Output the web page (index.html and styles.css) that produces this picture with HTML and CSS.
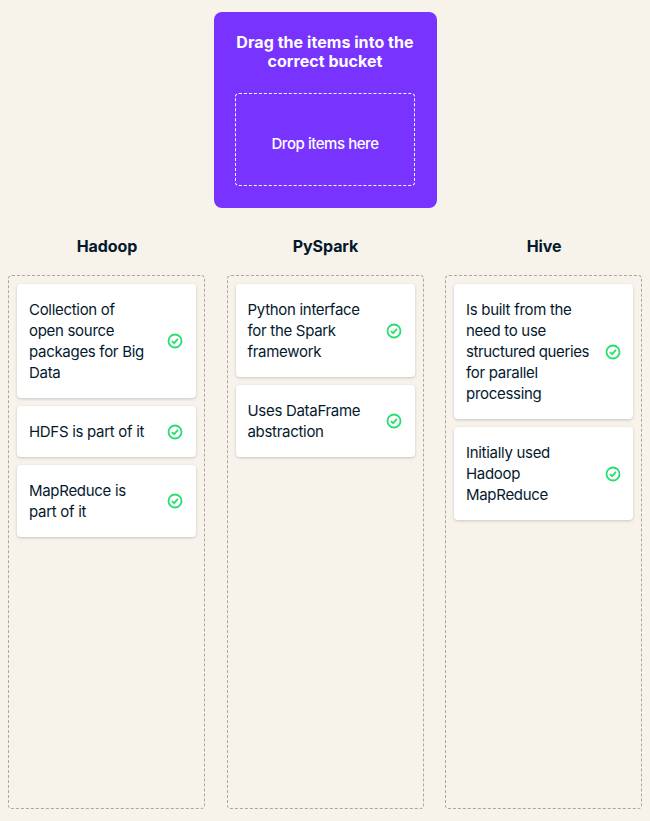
FILE: index.html
```html
<!DOCTYPE html>
<html lang="en">
<head>
<meta charset="utf-8">
<title>Drag the items into the correct bucket</title>
<link rel="stylesheet" href="styles.css">
</head>
<body>
<svg width="0" height="0" class="defs"><symbol id="check" viewBox="0 0 18 18"><circle cx="9" cy="9" r="6.5"/><path d="M5.9 9.1l2.3 2.1 3.7-4.3"/></symbol></svg>
<section class="source">
  <h1>Drag the items into the<br>correct bucket</h1>
  <div class="drop">Drop items here</div>
</section>
<main class="buckets">
  <section class="bucket">
    <h2>Hadoop</h2>
    <div class="zone">
      <div class="card"><p>Collection of<br>open source<br>packages for Big<br>Data</p><svg class="icon"><use href="#check"/></svg></div>
      <div class="card"><p>HDFS is part of it</p><svg class="icon"><use href="#check"/></svg></div>
      <div class="card"><p>MapReduce is<br>part of it</p><svg class="icon"><use href="#check"/></svg></div>
    </div>
  </section>
  <section class="bucket">
    <h2>PySpark</h2>
    <div class="zone">
      <div class="card"><p>Python interface<br>for the Spark<br>framework</p><svg class="icon"><use href="#check"/></svg></div>
      <div class="card"><p>Uses DataFrame<br>abstraction</p><svg class="icon"><use href="#check"/></svg></div>
    </div>
  </section>
  <section class="bucket">
    <h2>Hive</h2>
    <div class="zone">
      <div class="card"><p>Is built from the<br>need to use<br><span class="snug">structured queries</span><br>for parallel<br>processing</p><svg class="icon"><use href="#check"/></svg></div>
      <div class="card"><p>Initially used<br>Hadoop<br>MapReduce</p><svg class="icon"><use href="#check"/></svg></div>
    </div>
  </section>
</main>
</body>
</html>
```
FILE: styles.css
```css
* { box-sizing: border-box; }
body {
  margin: 0;
  padding: 12px 8px;
  height: 821px;
  display: flex;
  flex-direction: column;
  background: #f7f3eb;
  color: #05192d;
  font: 15px/21px Inter, "Liberation Sans", sans-serif;
  letter-spacing: -0.3px;
}
h1, h2, p { margin: 0; }
.defs { display: none; }
.source {
  width: 223px;
  height: 196px;
  margin-left: 206px;
  padding: 21px 22px 22px 21px;
  flex: none;
  border-radius: 8px;
  background: #7933ff;
  color: #fff;
  text-align: center;
}
h1 {
  height: 60px;
  font-size: 16px;
  line-height: 19px;
  font-weight: 700;
  letter-spacing: 0.05px;
  white-space: nowrap;
}
.drop {
  height: 93px;
  padding-top: 8px;
  display: flex;
  align-items: center;
  justify-content: center;
  border: 1px dashed #fff;
  border-radius: 4px;
  font-weight: 500;
  letter-spacing: -0.45px;
}
.buckets {
  flex: 1;
  display: grid;
  grid-template-columns: repeat(3, 197px);
  justify-content: space-between;
}
.bucket { display: flex; flex-direction: column; }
h2 {
  height: 67px;
  padding: 28px 0 0 1px;
  font-size: 16px;
  line-height: 20px;
  font-weight: 700;
  letter-spacing: -0.1px;
  text-align: center;
}
.zone {
  flex: 1;
  padding: 8px;
  display: flex;
  flex-direction: column;
  gap: 8px;
  border: 1px dashed #aaa6a1;
  border-radius: 4px;
}
.card {
  padding: 15px 12px;
  display: flex;
  align-items: center;
  justify-content: space-between;
  border-radius: 4px;
  background: #fff;
  box-shadow: 0 1px 3px rgba(5, 25, 45, 0.2);
}
.card p { white-space: nowrap; }
.snug { letter-spacing: -0.4px; }
.icon {
  width: 18px;
  height: 18px;
  flex: none;
  fill: none;
  stroke: #27df70;
  stroke-width: 1.8;
}
.bucket:last-child .card { padding-right: 11.5px; }
```
